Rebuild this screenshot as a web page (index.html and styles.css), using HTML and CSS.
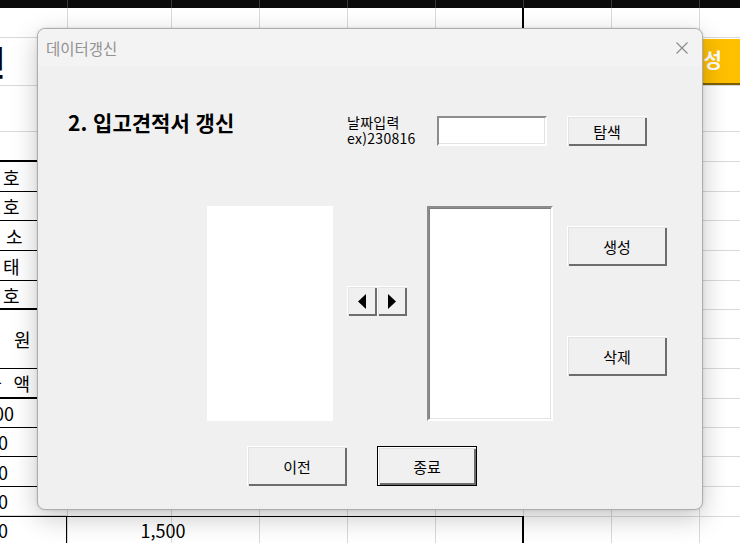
FILE: index.html
```html
<!DOCTYPE html>
<html lang="ko">
<head>
    <meta charset="UTF-8">
    <meta name="viewport" content="width=device-width, initial-scale=1.0">
    <title>데이터갱신</title>
    <link rel="stylesheet" href="styles.css">
</head>
<body>
    <div class="sheet">
        <div class="row colhead"></div>
        <div class="row r-top"><div class="top-gap"></div><div class="top-mark"></div></div>
        <div class="row h48">
            <div class="lc big"><span>전</span></div>
            <div class="rc"><div class="gold">생성</div></div>
        </div>
        <div class="row h46"><div class="lc"></div><div class="rc"></div></div>
        <div class="row h30"><div class="lc bk2"></div><div class="rc"></div></div>
        <div class="row h30"><div class="lc bk">호</div><div class="rc"></div></div>
        <div class="row h29"><div class="lc bk">호</div><div class="rc"></div></div>
        <div class="row h30"><div class="lc bk s">소</div><div class="rc"></div></div>
        <div class="row h30"><div class="lc bk">태</div><div class="rc"></div></div>
        <div class="row h29"><div class="lc bk2">호</div><div class="rc"></div></div>
        <div class="row h59">
            <div class="lc bk won">원</div>
            <div class="rc split"><div class="sub h29"></div><div class="sub h30"></div></div>
        </div>
        <div class="row h30"><div class="lc bk2 price">가액</div><div class="rc"></div></div>
        <div class="row h29"><div class="lc bk"><div class="num w14">3,000</div></div><div class="rc"></div></div>
        <div class="row h29"><div class="lc bk"><div class="num">2,000</div></div><div class="rc"></div></div>
        <div class="row h30"><div class="lc bk"><div class="num">1,000</div></div><div class="rc"></div></div>
        <div class="row h29"><div class="lc"><div class="num">1,500</div></div><div class="rc no-line"></div></div>
        <div class="row last">
            <div class="cell c1"><div class="num">1,500</div></div>
            <div class="cell c2">1,500</div>
            <div class="cell c3"></div>
            <div class="cell c4"></div>
        </div>
    </div>

    <div class="dialog">
        <div class="titlebar">
            <span class="title">데이터갱신</span>
            <svg class="close" width="12" height="12" viewBox="0 0 12 12">
                <path d="M0.5 0.5 L11.5 11.5 M11.5 0.5 L0.5 11.5" stroke="#8a8a8a" stroke-width="1.1" fill="none"/>
            </svg>
        </div>
        <div class="form">
            <div class="top-row">
                <div class="heading">2. 입고견적서 갱신</div>
                <div class="label">날짜입력<br>ex)230816</div>
                <div class="textbox"></div>
                <button class="btn search">탐색</button>
            </div>
            <div class="mid-row">
                <div class="list-left"></div>
                <div class="arrows">
                    <button class="btn arrow">
                        <svg width="8" height="15" viewBox="0 0 8 15"><polygon points="8,0 8,15 0,7.5" fill="#000"/></svg>
                    </button>
                    <button class="btn arrow">
                        <svg width="8" height="15" viewBox="0 0 8 15"><polygon points="0,0 0,15 8,7.5" fill="#000"/></svg>
                    </button>
                </div>
                <div class="list-right"></div>
                <div class="side">
                    <button class="btn wide">생성</button>
                    <button class="btn wide">삭제</button>
                </div>
            </div>
            <div class="bottom-row">
                <button class="btn wide">이전</button>
                <button class="btn wide default">종료</button>
            </div>
        </div>
    </div>
</body>
</html>
```

FILE: styles.css
```css
body {
    margin: 0;
    width: 740px;
    height: 543px;
    overflow: hidden;
    position: relative;
    font-family: "Noto Sans CJK KR", "Noto Sans", sans-serif;
    color: #000;
}

/* spreadsheet behind the form */
.sheet {
    height: 543px;
    background-color: #fff;
    background-image:
        linear-gradient(#d9d9d9, #d9d9d9), linear-gradient(#d9d9d9, #d9d9d9),
        linear-gradient(#d9d9d9, #d9d9d9), linear-gradient(#d9d9d9, #d9d9d9),
        linear-gradient(#d9d9d9, #d9d9d9), linear-gradient(#d9d9d9, #d9d9d9),
        linear-gradient(#d9d9d9, #d9d9d9), linear-gradient(#d9d9d9, #d9d9d9);
    background-size: 1px 100%;
    background-repeat: no-repeat;
    background-position: 67px 0, 171px 0, 259px 0, 347px 0, 435px 0, 523px 0, 611px 0, 699px 0;
}
.row {
    display: flex;
    box-sizing: border-box;
}
.colhead {
    height: 8px;
    background-color: #0b0b0b;
    background-image:
        linear-gradient(#3a3a3a, #3a3a3a), linear-gradient(#3a3a3a, #3a3a3a),
        linear-gradient(#3a3a3a, #3a3a3a), linear-gradient(#3a3a3a, #3a3a3a),
        linear-gradient(#3a3a3a, #3a3a3a), linear-gradient(#3a3a3a, #3a3a3a),
        linear-gradient(#3a3a3a, #3a3a3a), linear-gradient(#3a3a3a, #3a3a3a);
    background-size: 1px 100%;
    background-repeat: no-repeat;
    background-position: 67px 0, 171px 0, 259px 0, 347px 0, 435px 0, 523px 0, 611px 0, 699px 0;
}
.r-top {
    height: 30px;
    border-bottom: 1px solid #d9d9d9;
}
.top-gap { width: 522px; }
.top-mark { width: 2px; background: #000; }

.h29 { height: 29px; }
.h30 { height: 30px; }
.h46 { height: 46px; }
.h48 { height: 48px; }
.h59 { height: 59px; }

.lc {
    width: 67px;
    flex: none;
    box-sizing: border-box;
    border-bottom: 1px solid #d9d9d9;
    display: flex;
    align-items: center;
    padding-left: 3px;
    font-size: 18px;
    line-height: 18px;
    overflow: visible;
}
.lc.bk { border-bottom-color: #000; }
.lc.bk2 { border-bottom: 2px solid #000; }
.lc.s { padding-left: 6px; }
.lc.won { padding-left: 14px; }
.lc.price { padding-left: 0; text-indent: -15px; letter-spacing: 12px; }
.lc.big {
    padding-left: 0;
    font-size: 34px;
    font-weight: bold;
    line-height: 34px;
}
.lc.big span { margin-left: -26px; }

.rc {
    flex: 1;
    box-sizing: border-box;
    border-bottom: 1px solid #d9d9d9;
    display: flex;
    justify-content: flex-end;
}
.rc.no-line { border-bottom: none; }
.rc.split {
    flex-direction: column;
    border-bottom: none;
}
.sub {
    box-sizing: border-box;
    border-bottom: 1px solid #d9d9d9;
}

.gold {
    width: 100px;
    height: 46px;
    margin-top: 1px;
    box-sizing: border-box;
    background: #ffc000;
    border-bottom: 2px solid #7f6000;
    color: #fff;
    font-size: 20px;
    font-weight: bold;
    text-align: right;
    padding-right: 18px;
    line-height: 42px;
}

.num {
    width: 8px;
    display: flex;
    justify-content: flex-end;
    white-space: nowrap;
    font-size: 18px;
}
.num.w14 { width: 14px; }
.lc .num { margin-left: -3px; }

.last {
    height: 27px;
}
.cell {
    box-sizing: border-box;
    border-top: 1px solid #000;
    display: flex;
    align-items: center;
    font-size: 18px;
}
.c1 { width: 67px; border-right: 1px solid #000; }
.c2 { width: 192px; justify-content: center; }
.c3 { width: 265px; border-right: 2px solid #000; }
.c4 { flex: 1; border-top-color: #d9d9d9; }

/* user form */
.dialog {
    position: absolute;
    left: 37px;
    top: 28px;
    width: 666px;
    height: 482px;
    box-sizing: border-box;
    background: #f0f0f0;
    border: 1px solid #adadad;
    border-radius: 8px;
    box-shadow: 0 8px 26px rgba(0, 0, 0, 0.22), 0 0 3px rgba(0, 0, 0, 0.12);
}
.titlebar {
    height: 37px;
    display: flex;
    align-items: center;
    justify-content: space-between;
    padding: 0 14px 0 8px;
    background: #f3f3f3;
    border-radius: 8px 8px 0 0;
}
.title {
    font-size: 15.5px;
    color: #929292;
}

.top-row {
    display: flex;
    align-items: flex-start;
    padding-top: 43px;
}
.heading {
    margin-left: 30px;
    width: 279px;
    font-size: 21px;
    font-weight: bold;
    line-height: 26px;
}
.label {
    width: 90px;
    margin-top: 5px;
    font-size: 14px;
    line-height: 16px;
    letter-spacing: 0.3px;
    white-space: nowrap;
}
.textbox {
    width: 110px;
    height: 30px;
    margin-top: 7px;
    box-sizing: border-box;
    background: #fff;
    border: 2px solid;
    border-color: #8c8c8c #fff #fff #8c8c8c;
    box-shadow: inset -1px -1px #e3e3e3;
}

.btn {
    box-sizing: border-box;
    padding: 0;
    border: none;
    background: #f0f0f0;
    box-shadow: inset 1px 1px #fff, inset 2px 2px #e3e3e3, inset -2px -2px #6d6d6d;
    font-family: "Noto Sans CJK KR", sans-serif;
    font-size: 15px;
    color: #000;
}
.search {
    width: 80px;
    height: 30px;
    margin-top: 7px;
    margin-left: 20px;
}

.mid-row {
    display: flex;
    align-items: flex-start;
    margin-top: 60px;
}
.list-left {
    width: 126px;
    height: 215px;
    margin-left: 169px;
    background: #fff;
}
.arrows {
    display: flex;
    margin-top: 80px;
    margin-left: 14px;
}
.arrow {
    width: 30px;
    height: 30px;
    display: flex;
    align-items: center;
    justify-content: center;
}
.list-right {
    width: 126px;
    height: 215px;
    margin-left: 20px;
    box-sizing: border-box;
    background: #fff;
    border: 2px solid;
    border-color: #8d8d8d #fff #fff #8d8d8d;
    box-shadow: inset 1px 1px #7f7f7f, inset -1px -1px #e3e3e3;
}
.side {
    display: flex;
    flex-direction: column;
    gap: 70px;
    margin-left: 14px;
    margin-top: 20px;
}
.wide {
    width: 100px;
    height: 40px;
}

.bottom-row {
    display: flex;
    gap: 30px;
    margin-top: 25px;
    margin-left: 209px;
}
.default {
    border: 1px solid #000;
    box-shadow: inset 1px 1px #fff, inset 2px 2px #e3e3e3, inset -2px -2px #6d6d6d;
}
```
